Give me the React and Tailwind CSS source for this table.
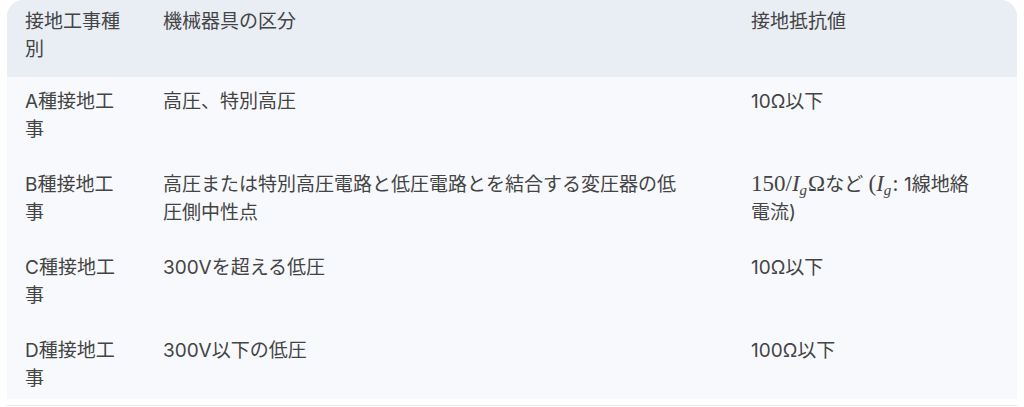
const rows = [
    { kind: 'A種接地工事', target: '高圧、特別高圧', value: '10Ω以下' },
    { kind: 'B種接地工事', target: '高圧または特別高圧電路と低圧電路とを結合する変圧器の低圧側中性点', value: 'math' },
    { kind: 'C種接地工事', target: '300Vを超える低圧', value: '10Ω以下' },
    { kind: 'D種接地工事', target: '300V以下の低圧', value: '100Ω以下' },
];

const mathText = "font-['Liberation_Serif','DejaVu_Serif',serif] text-[23px] leading-[0]";

// KaTeX-ish inline math: I with subscript g
const Ig = () => (
    <span className={mathText}>
        <span className="italic">I</span>
        <span className="italic text-[15px] leading-[0] relative top-[4px] mr-[1px]">g</span>
    </span>
);

const ResistanceB = () => (
    <>
        <span className={mathText}>150/</span>
        <Ig />
        <span className={mathText}>Ω</span>
        など <span className={mathText}>(</span>
        <Ig />
        <span className={mathText}>:</span> 1線地絡電流)
    </>
);

export default function App() {
    return (
        <div className="w-[1024px] h-[407px] bg-white overflow-hidden font-['Inter','Noto_Sans_CJK_JP',sans-serif] text-[19px] leading-[28px] text-[#444444]">
            <div className="ml-[7px] w-[1010px] rounded-t-2xl overflow-hidden">
                <table className="w-full table-fixed border-collapse">
                    <colgroup>
                        <col className="w-[138px]" />
                        <col className="w-[588px]" />
                        <col className="w-[284px]" />
                    </colgroup>
                    <thead>
                        <tr className="bg-[#e9edf4] text-left align-top">
                            <th className="font-normal pl-[18px] pr-[18px] pt-[8px] pb-[13px]">接地工事種別</th>
                            <th className="font-normal pl-[18px] pr-[40px] pt-[8px] pb-[13px]">機械器具の区分</th>
                            <th className="font-normal pl-[18px] pr-[30px] pt-[8px] pb-[13px]">接地抵抗値</th>
                        </tr>
                    </thead>
                    <tbody className="bg-[#f7f9fc]">
                        {rows.map((row, i) => {
                            const pad = i === rows.length - 1 ? 'pt-[11px] pb-[6px]' : 'pt-[11px] pb-[16px]';
                            return (
                                <tr key={row.kind} className="align-top">
                                    <td className={`pl-[18px] pr-[18px] ${pad}`}>{row.kind}</td>
                                    <td className={`pl-[18px] pr-[40px] ${pad}`}>{row.target}</td>
                                    <td className={`pl-[18px] pr-[30px] ${pad}`}>
                                        {row.value === 'math' ? <ResistanceB /> : row.value}
                                    </td>
                                </tr>
                            );
                        })}
                    </tbody>
                </table>
            </div>
            <div className="ml-[7px] w-[1010px] mt-[6px] border-t border-[#e6e8ec]" />
        </div>
    );
}
